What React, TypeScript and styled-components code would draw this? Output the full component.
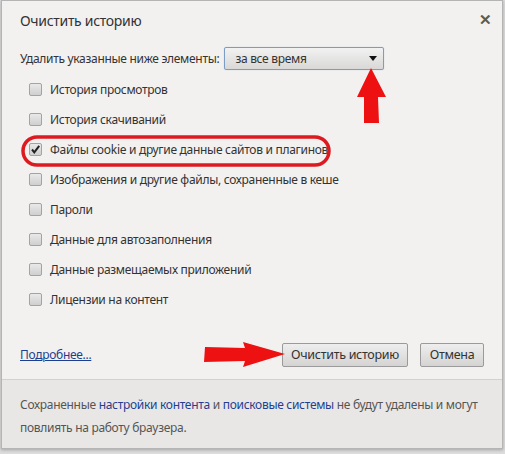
import React from "react";
import styled, { createGlobalStyle } from "styled-components";

const Global = createGlobalStyle`
  html, body { margin: 0; padding: 0; background: #dcdcdc; }
  body {
    font-family: "Noto Sans", "Open Sans", sans-serif;
    font-size: 12px;
    letter-spacing: -0.3px;
    width: 505px;
    height: 454px;
    overflow: hidden;
  }
`;

const Dialog = styled.div`
  position: relative;
  box-sizing: border-box;
  width: 502px;
  height: 449px;
  margin-left: 1px;
  border: 1px solid #b4b4b4;
  background: #f2f1f0;
  display: flex;
  flex-direction: column;
  box-shadow: 0 1px 3px rgba(0,0,0,0.25);
`;

const Header = styled.div`
  display: flex;
  justify-content: space-between;
  align-items: flex-start;
  padding: 10px 10px 0 18px;
  height: 30px;
`;

const Title = styled.h1`
  margin: 0;
  font-size: 14px;
  font-weight: normal;
  color: #333;
  letter-spacing: -0.3px;
`;

const Close = styled.span`
  font-size: 15px;
  font-weight: bold;
  color: #5a5a5a;
  line-height: 1;
  margin-top: 1px;
`;

const Body = styled.div`
  flex: 1;
  padding: 0 18px;
  display: flex;
  flex-direction: column;
`;

const SelectRow = styled.div`
  display: flex;
  align-items: center;
  gap: 5px;
  height: 23px;
  margin-top: 6px;
  color: #333;
`;

const Select = styled.div`
  box-sizing: border-box;
  width: 160px;
  height: 23px;
  border: 1px solid #7d9cc4;
  border-radius: 2px;
  background: linear-gradient(#f2f2f2, #d9d8d7);
  display: flex;
  align-items: center;
  justify-content: space-between;
  padding: 0 6px 0 10px;
  color: #333;
  box-shadow: 0 0 1px #9fb7d8;
`;

const Caret = styled.span`
  width: 0;
  height: 0;
  border-left: 4px solid transparent;
  border-right: 4px solid transparent;
  border-top: 5px solid #111;
`;

const List = styled.div`
  display: flex;
  flex-direction: column;
  margin-top: 4px;
  padding-left: 9px;
`;

const Row = styled.label`
  display: flex;
  align-items: center;
  gap: 8px;
  height: 30.1px;
  color: #333;
`;

const Box = styled.span`
  box-sizing: border-box;
  width: 13px;
  height: 13px;
  border: 1px solid #a3a3a3;
  border-radius: 2px;
  background: linear-gradient(#e9e9e9, #cfcfcf);
  display: flex;
  align-items: center;
  justify-content: center;
`;

const Actions = styled.div`
  display: flex;
  align-items: center;
  margin-top: 28px;
  height: 24px;
`;

const Link = styled.a`
  color: #1d3f8f;
  text-decoration: underline;
  margin-right: auto;
`;

const Button = styled.button<{ $w: number }>`
  box-sizing: border-box;
  width: ${(p) => p.$w}px;
  height: 24px;
  margin-left: 12px;
  border: 1px solid #9a9a9a;
  border-radius: 2px;
  background: linear-gradient(#eeeeee, #d5d4d3);
  font-family: inherit;
  font-size: 12.5px;
  letter-spacing: -0.3px;
  color: #333;
  padding: 0;
`;

const Footer = styled.div`
  height: 69px;
  box-sizing: border-box;
  border-top: 1px solid #d3d1cf;
  background: #e9e7e5;
  padding: 13px 18px 0 18px;
  line-height: 23px;
  color: #555;
`;

const FLine = styled.div`
  white-space: nowrap;
`;

const FLink = styled.span`
  color: #233f92;
`;

const Overlay = styled.svg`
  position: absolute;
  left: 0;
  top: 0;
  pointer-events: none;
`;

const items = [
  "История просмотров",
  "История скачиваний",
  "Файлы cookie и другие данные сайтов и плагинов",
  "Изображения и другие файлы, сохраненные в кеше",
  "Пароли",
  "Данные для автозаполнения",
  "Данные размещаемых приложений",
  "Лицензии на контент",
];

export default function App() {
  return (
    <>
      <Global />
      <Dialog>
        <Header>
          <Title>Очистить историю</Title>
          <Close>✕</Close>
        </Header>
        <Body>
          <SelectRow>
            <span>Удалить указанные ниже элементы:</span>
            <Select>
              <span>за все время</span>
              <Caret />
            </Select>
          </SelectRow>
          <List>
            {items.map((t, i) => (
              <Row key={t}>
                <Box>
                  {i === 2 && (
                    <svg width="11" height="11" viewBox="0 0 11 11">
                      <path d="M2 5.5 L4.3 8.3 L9.2 1.8" fill="none" stroke="#222" strokeWidth="2" />
                    </svg>
                  )}
                </Box>
                <span>{t}</span>
              </Row>
            ))}
          </List>
          <Actions>
            <Link href="#">Подробнее...</Link>
            <Button $w={126}>Очистить историю</Button>
            <Button $w={64}>Отмена</Button>
          </Actions>
        </Body>
        <Footer>
          <FLine>
            Сохраненные <FLink>настройки контента</FLink> и <FLink>поисковые системы</FLink> не будут удалены и могут
          </FLine>
          <FLine>повлиять на работу браузера.</FLine>
        </Footer>
        <Overlay width="505" height="454" viewBox="0 0 505 454">
          <rect x="21" y="136" width="306" height="28" rx="14" fill="none" stroke="#dd1a20" strokeWidth="3.5" />
          <path d="M369 67 L384 96 L376 96 L377 122 L362 122 L362 96 L355 96 Z" fill="#ee1111" />
          <path d="M283 353 L241 341 L243 347 L203 346 L202 361 L243 360 L241 366 Z" fill="#ee1111" />
        </Overlay>
      </Dialog>
    </>
  );
}
